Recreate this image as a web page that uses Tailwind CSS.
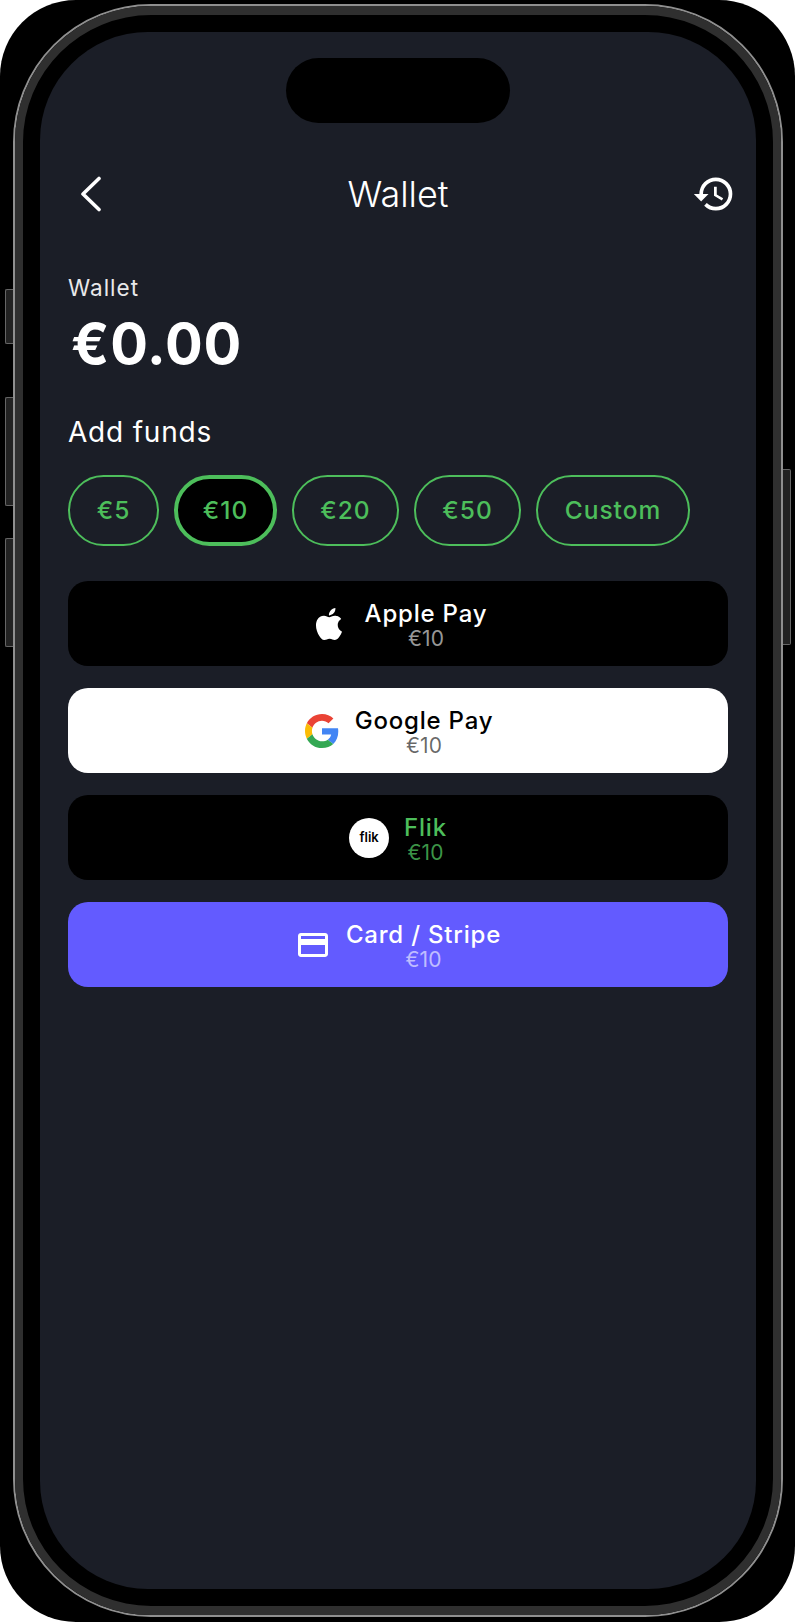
<!DOCTYPE html>
<html lang="en">

<head>
    <meta charset="UTF-8">
    <meta name="viewport" content="width=device-width, initial-scale=1.0">
    <title>Wallet</title>
    <script src="https://cdn.jsdelivr.net/npm/@tailwindcss/browser@4"></script>
</head>

<body class="bg-white font-['Inter',sans-serif]">
    <div class="relative w-[795px] h-[1622px] bg-black rounded-[76px] pt-[4px] pb-[5px] pl-[13px] pr-[12px]">
        <!-- Side buttons -->
        <div class="absolute left-[5px] top-[289px] w-[8px] h-[55px] bg-[#222] border border-r-0 border-[#666] rounded-l-[2px]"></div>
        <div class="absolute left-[5px] top-[397px] w-[8px] h-[109px] bg-[#222] border border-r-0 border-[#666] rounded-l-[2px]"></div>
        <div class="absolute left-[5px] top-[538px] w-[8px] h-[109px] bg-[#222] border border-r-0 border-[#666] rounded-l-[2px]"></div>
        <div class="absolute left-[783px] top-[469px] w-[8px] h-[176px] bg-[#222] border border-l-0 border-[#666] rounded-r-[2px]"></div>

        <!-- Frame -->
        <div class="h-full border-2 border-[#8f8f8f] rounded-[138px]">
            <div class="h-full border-[8px] border-y-[9px] border-[#2f2f2f] bg-black rounded-[136px] p-[17px]">
                <!-- Screen -->
                <div class="h-full bg-[#1b1e27] rounded-[108px] pt-[26px] text-white">
                    <div class="mx-auto w-[224px] h-[65px] bg-black rounded-[33px]"></div>

                    <!-- Header -->
                    <div class="mt-[49px] px-[40px] h-[44px] grid grid-cols-[1fr_auto_1fr] items-center">
                        <svg class="w-[22px] h-[36px]" viewBox="0 0 22 36" fill="none" stroke="white" stroke-width="3.6" stroke-linecap="round" stroke-linejoin="round">
                            <path d="M19 2.5 3 18l16 15.5"/>
                        </svg>
                        <span class="text-[36px] leading-[36px] font-light">Wallet</span>
                        <svg class="w-[44px] h-[44px] -mr-[20px] justify-self-end" viewBox="0 0 24 24" fill="white">
                            <path d="M13 3a9 9 0 0 0-9 9H1l3.89 3.89.07.14L9 12H6c0-3.87 3.13-7 7-7s7 3.13 7 7-3.13 7-7 7c-1.93 0-3.68-.79-4.94-2.06l-1.42 1.42A8.954 8.954 0 0 0 13 21a9 9 0 0 0 0-18zm-1 5v5l4.28 2.54.72-1.21-3.5-2.08V8H12z"/>
                        </svg>
                    </div>

                    <div class="px-[28px] mt-[60px]">
                        <!-- Balance -->
                        <p class="text-[22.5px] leading-[24px] tracking-[1px] text-[#e8e8ea] font-normal">Wallet</p>
                        <p class="mt-[13px] pl-[3px] text-[56px] leading-[62px] font-bold tracking-[0.8px]">€0.00</p>

                        <!-- Add funds -->
                        <p class="mt-[41px] text-[28px] leading-[32px] tracking-[0.8px]">Add funds</p>
                        <div class="mt-[27px] flex gap-[15px] text-[24.5px] font-medium tracking-[1px] text-[#4dbe5b]">
                            <button class="w-[91px] h-[71px] rounded-[36px] border-2 border-[#4dbe5b]">€5</button>
                            <button class="w-[103px] h-[71px] rounded-[36px] border-4 border-[#4dbe5b] bg-black">€10</button>
                            <button class="w-[107px] h-[71px] rounded-[36px] border-2 border-[#4dbe5b]">€20</button>
                            <button class="w-[107px] h-[71px] rounded-[36px] border-2 border-[#4dbe5b]">€50</button>
                            <button class="w-[154px] h-[71px] rounded-[36px] border-2 border-[#4dbe5b]">Custom</button>
                        </div>

                        <!-- Payment methods -->
                        <div class="mt-[35px] flex flex-col gap-[22px]">
                            <button class="h-[85px] rounded-[20px] bg-black flex items-center justify-center gap-[20px] pl-[4px] text-white">
                                <svg class="w-[32px] h-[32px]" viewBox="0 0 24 24" fill="white">
                                    <path d="M12.152 6.896c-.948 0-2.415-1.078-3.96-1.04-2.04.027-3.91 1.183-4.961 3.014-2.117 3.675-.546 9.103 1.519 12.09 1.013 1.454 2.208 3.09 3.792 3.039 1.52-.065 2.09-.987 3.935-.987 1.831 0 2.35.987 3.96.948 1.637-.026 2.676-1.48 3.676-2.948 1.156-1.688 1.636-3.325 1.662-3.415-.039-.013-3.182-1.221-3.22-4.857-.026-3.04 2.48-4.494 2.597-4.559-1.429-2.09-3.623-2.324-4.39-2.376-2-.156-3.675 1.09-4.61 1.09zM15.53 3.83c.843-1.012 1.4-2.427 1.245-3.83-1.207.052-2.662.805-3.532 1.818-.78.896-1.454 2.338-1.273 3.714 1.338.104 2.715-.688 3.559-1.701"/>
                                </svg>
                                <span class="flex flex-col items-center pt-[3px]">
                                    <span class="text-[24px] leading-[26px] font-medium tracking-[0.8px]">Apple Pay</span>
                                    <span class="mt-[1px] text-[21px] leading-[22px] text-white/60">€10</span>
                                </span>
                            </button>
                            <button class="h-[85px] rounded-[20px] bg-white flex items-center justify-center gap-[16px] pl-[2px] text-black">
                                <svg class="w-[34px] h-[34px]" viewBox="0 0 48 48">
                                    <path fill="#EA4335" d="M24 9.5c3.54 0 6.71 1.22 9.21 3.6l6.85-6.85C35.9 2.38 30.47 0 24 0 14.62 0 6.51 5.38 2.56 13.22l7.98 6.19C12.43 13.72 17.74 9.5 24 9.5z"/>
                                    <path fill="#4285F4" d="M46.98 24.55c0-1.57-.15-3.09-.38-4.55H24v9.02h12.94c-.58 2.96-2.26 5.48-4.78 7.18l7.73 6c4.51-4.18 7.09-10.36 7.09-17.65z"/>
                                    <path fill="#FBBC05" d="M10.53 28.59c-.48-1.45-.76-2.99-.76-4.59s.27-3.14.76-4.59l-7.98-6.19C.92 16.46 0 20.12 0 24c0 3.88.92 7.54 2.56 10.78l7.97-6.19z"/>
                                    <path fill="#34A853" d="M24 48c6.48 0 11.93-2.13 15.89-5.81l-7.73-6c-2.15 1.45-4.92 2.3-8.16 2.3-6.26 0-11.57-4.22-13.47-9.91l-7.98 6.19C6.51 42.62 14.62 48 24 48z"/>
                                </svg>
                                <span class="flex flex-col items-center pt-[3px]">
                                    <span class="text-[24px] leading-[26px] font-medium tracking-[0.8px]">Google Pay</span>
                                    <span class="mt-[1px] text-[21px] leading-[22px] text-black/60">€10</span>
                                </span>
                            </button>
                            <button class="h-[85px] rounded-[20px] bg-black flex items-center justify-center gap-[15px] text-[#4dbe5b]">
                                <span class="w-[40px] h-[40px] rounded-full bg-white flex items-center justify-center text-black text-[13px] font-semibold">flik</span>
                                <span class="flex flex-col items-center pt-[3px]">
                                    <span class="text-[24px] leading-[26px] font-medium tracking-[0.8px]">Flik</span>
                                    <span class="mt-[1px] text-[21px] leading-[22px] text-[#4dbe5b]/80">€10</span>
                                </span>
                            </button>
                            <button class="h-[85px] rounded-[20px] bg-[#635bff] flex items-center justify-center gap-[15px] text-white">
                                <svg class="w-[36px] h-[36px]" viewBox="0 0 24 24" fill="white">
                                    <path d="M20 4H4c-1.11 0-1.99.89-1.99 2L2 18c0 1.11.89 2 2 2h16c1.11 0 2-.89 2-2V6c0-1.11-.89-2-2-2zm0 14H4v-6h16v6zm0-10H4V6h16v2z"/>
                                </svg>
                                <span class="flex flex-col items-center pt-[3px]">
                                    <span class="text-[24px] leading-[26px] font-medium tracking-[0.8px]">Card / Stripe</span>
                                    <span class="mt-[1px] text-[21px] leading-[22px] text-white/60">€10</span>
                                </span>
                            </button>
                        </div>
                    </div>
                </div>
            </div>
        </div>
    </div>
</body>

</html>
